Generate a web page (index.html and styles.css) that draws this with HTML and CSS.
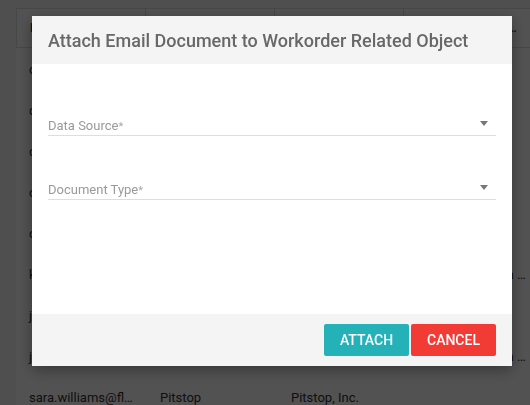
FILE: index.html
```html
<!DOCTYPE html>
<html>
<head>
<meta charset="utf-8">
<link rel="stylesheet" href="styles.css">
</head>
<body>
<div class="page">
  <div class="table">
    <div class="row head">
      <div class="cell">From</div><div class="cell">Company</div><div class="cell">Organization</div><div class="cell">Organization Area Name</div>
    </div>
    <div class="row"><div class="cell">chris.parker@fleet.com</div><div class="cell">Pitstop</div><div class="cell">Pitstop, Inc.</div><div class="cell">Fleet</div></div>
    <div class="row"><div class="cell">carl.jones@fleet.com</div><div class="cell">Pitstop</div><div class="cell">Pitstop, Inc.</div><div class="cell">Fleet</div></div>
    <div class="row"><div class="cell">carol.smith@fleet.com</div><div class="cell">Pitstop</div><div class="cell">Pitstop, Inc.</div><div class="cell">Fleet</div></div>
    <div class="row"><div class="cell">craig.brown@fleet.com</div><div class="cell">Pitstop</div><div class="cell">Pitstop, Inc.</div><div class="cell">Fleet</div></div>
    <div class="row"><div class="cell">cindy.lee@fleet.com</div><div class="cell">Pitstop</div><div class="cell">Pitstop, Inc.</div><div class="cell">Fleet</div></div>
    <div class="row"><div class="cell">kevin.hall@fleet.com</div><div class="cell">Pitstop</div><div class="cell">Pitstop, Inc.</div><div class="cell">Pitstop Fleet Area North</div></div>
    <div class="row"><div class="cell">jane.doe@fleet.com</div><div class="cell">Pitstop</div><div class="cell">Pitstop, Inc.</div><div class="cell">Fleet</div></div>
    <div class="row"><div class="cell">john.doe@fleet.com</div><div class="cell">Pitstop</div><div class="cell">Pitstop, Inc.</div><div class="cell">Pitstop Fleet Area South</div></div>
    <div class="row"><div class="cell">sara.williams@fleet.com</div><div class="cell">Pitstop</div><div class="cell">Pitstop, Inc.</div><div class="cell"></div></div>
  </div>
</div>

<div class="overlay">
  <div class="dialog">
    <div class="dialog-header">Attach Email Document to Workorder Related Object</div>
    <div class="dialog-body">
      <div class="field">
        <span class="label">Data Source<span class="req">*</span></span>
        <span class="arrow"></span>
      </div>
      <div class="field">
        <span class="label">Document Type<span class="req">*</span></span>
        <span class="arrow"></span>
      </div>
    </div>
    <div class="dialog-footer">
      <button class="btn btn-attach">Attach</button>
      <button class="btn btn-cancel">Cancel</button>
    </div>
  </div>
</div>
</body>
</html>
```
FILE: styles.css
```css
html, body {
  margin: 0;
  padding: 0;
  width: 530px;
  height: 405px;
  overflow: hidden;
  font-family: Roboto, "Liberation Sans", sans-serif;
}

.page {
  background: #f4f4f4;
  height: 405px;
  padding: 8px 0 0 16px;
  box-sizing: border-box;
}

.table {
  background: #fff;
  width: 540px;
  height: 397px;
}

.row {
  display: grid;
  grid-template-columns: 129px 129px 129px 137px;
  height: 41px;
  align-items: center;
  font-size: 13px;
  color: #333;
}

.row.head {
  height: 40px;
  border-top: 1px solid #dcdcdc;
  border-bottom: 1px solid #dcdcdc;
  box-sizing: border-box;
  font-weight: 500;
  align-items: stretch;
}

.row.head .cell {
  border-left: 1px solid #dcdcdc;
  line-height: 38px;
}

.row.head .cell:nth-child(4) {
  padding-left: 13px;
  padding-right: 23px;
}

.row.head + .row {
  margin-top: 1px;
}

.cell {
  padding: 0 13px;
  white-space: nowrap;
  overflow: hidden;
  text-overflow: ellipsis;
  box-sizing: border-box;
}

.cell:nth-child(1) {
  padding-right: 11px;
}

.cell:nth-child(2) {
  padding-left: 15px;
}

.cell:nth-child(3) {
  padding-left: 17px;
}

.cell:nth-child(4) {
  padding-left: 8px;
}

.overlay {
  position: fixed;
  top: 0;
  left: 0;
  width: 530px;
  height: 405px;
  box-sizing: border-box;
  background: rgba(0, 0, 0, 0.68);
  padding: 16px 0 0 32px;
}

.dialog {
  width: 480px;
  background: #fff;
  box-shadow: 0 4px 14px rgba(0, 0, 0, 0.35);
}

.dialog-header {
  height: 48px;
  background: #f4f4f4;
  padding: 0 16px;
  display: flex;
  align-items: center;
  font-size: 18px;
  font-weight: 500;
  color: #686868;
}

.dialog-body {
  height: 250px;
  box-sizing: border-box;
  padding: 24px 16px 0;
  display: flex;
  flex-direction: column;
  gap: 16px;
}

.field {
  height: 48px;
  box-sizing: border-box;
  border-bottom: 1px solid #dedede;
  display: flex;
  align-items: flex-end;
  justify-content: space-between;
}

.label {
  font-size: 13px;
  line-height: 15px;
  color: #9a9a9a;
  padding-bottom: 1px;
}

.req {
  font-size: 11px;
  color: #a8a8a8;
}

.arrow {
  width: 0;
  height: 0;
  border-left: 4px solid transparent;
  border-right: 4px solid transparent;
  border-top: 5px solid #777;
  margin: 0 8px 9px 0;
}

.dialog-footer {
  height: 52px;
  box-sizing: border-box;
  background: #f4f4f4;
  padding: 10px 16px;
  display: flex;
  justify-content: flex-end;
  gap: 2px;
}

.btn {
  width: 85px;
  height: 32px;
  border: none;
  border-radius: 2px;
  color: #fff;
  font-family: Roboto, "Liberation Sans", sans-serif;
  font-size: 14px;
  font-weight: 500;
  text-transform: uppercase;
  padding: 0;
}

.btn-attach {
  background: #24b1b8;
}

.btn-cancel {
  background: #f33b36;
}
```
